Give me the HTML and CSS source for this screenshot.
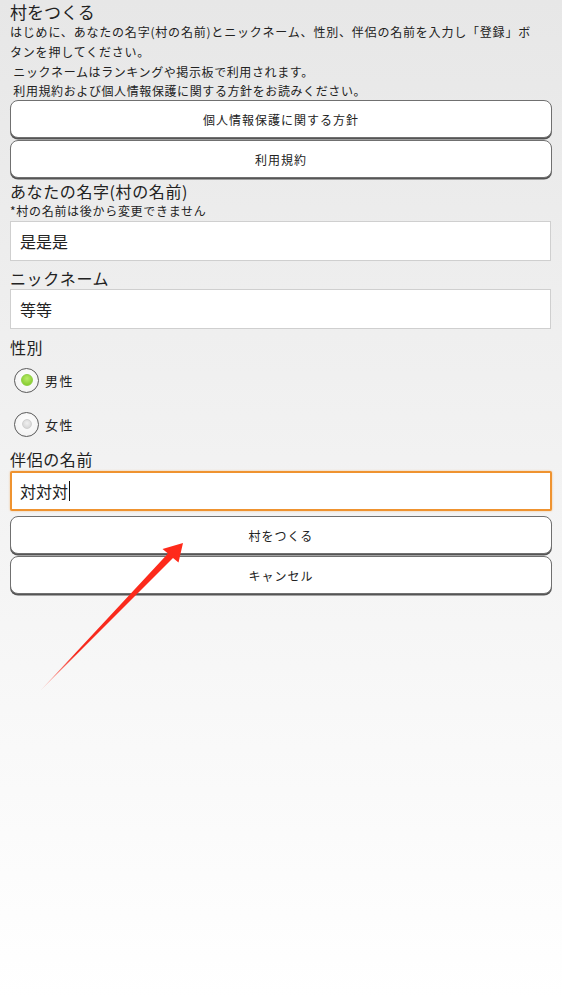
FILE: index.html
```html
<!DOCTYPE html>
<html lang="ja">
<head>
<meta charset="utf-8">
<title>村をつくる</title>
<link rel="stylesheet" href="styles.css">
</head>
<body>
<div class="page">
  <h1 class="title">村をつくる</h1>
  <p class="desc">はじめに、あなたの名字(村の名前)とニックネーム、性別、伴侶の名前を入力し「登録」ボタンを押してください。</p>
  <p class="desc desc-sub">&nbsp;ニックネームはランキングや掲示板で利用されます。<br>&nbsp;利用規約および個人情報保護に関する方針をお読みください。</p>
  <div class="btn">個人情報保護に関する方針</div>
  <div class="btn">利用規約</div>

  <div class="label first">あなたの名字(村の名前)</div>
  <div class="note">*村の名前は後から変更できません</div>
  <div class="field">是是是</div>

  <div class="label">ニックネーム</div>
  <div class="field">等等</div>

  <div class="label sex">性別</div>
  <div class="radio-row"><span class="radio on"></span><span class="radio-text">男性</span></div>
  <div class="radio-row"><span class="radio"></span><span class="radio-text">女性</span></div>

  <div class="label partner">伴侶の名前</div>
  <div class="field focus">対対対<span class="caret"></span></div>

  <div class="btn submit">村をつくる</div>
  <div class="btn">キャンセル</div>
</div>
<svg class="arrow" width="562" height="999" viewBox="0 0 562 999">
  <defs>
    <linearGradient id="ag" x1="40" y1="691" x2="183" y2="543" gradientUnits="userSpaceOnUse">
      <stop offset="0" stop-color="#ff3a2a" stop-opacity="0.25"/>
      <stop offset="0.25" stop-color="#f62a1e"/>
      <stop offset="1" stop-color="#ff2a1a"/>
    </linearGradient>
  </defs>
  <polygon points="40,691 168,553.5 162.5,549 183,543 178.5,562.5 173,558" fill="url(#ag)"/>
</svg>
</body>
</html>
```

FILE: styles.css
```css
html, body {
  margin: 0;
  padding: 0;
}
body {
  min-height: 999px;
  background: linear-gradient(#e7e7e7 0%, #f3f3f3 50%, #ffffff 100%);
  font-family: "Noto Sans CJK JP", "Noto Sans", sans-serif;
  color: #222;
  position: relative;
}
.page {
  padding: 0 10px;
  display: flex;
  flex-direction: column;
}
.title {
  margin: 0;
  padding-top: 1px;
  font-size: 17px;
  font-weight: normal;
  line-height: 21px;
}
.desc {
  margin: 0;
  font-size: 12px;
  letter-spacing: 0.8px;
  line-height: 20px;
  max-width: 530px;
}
.desc-sub {
  line-height: 19px;
  letter-spacing: 0.6px;
  max-width: none;
}
.btn {
  height: 36px;
  border: 1.5px solid #707070;
  border-radius: 8px;
  background: #fff;
  box-shadow: 0 1.5px 0 #555;
  display: flex;
  align-items: center;
  justify-content: center;
  font-size: 12px;
  letter-spacing: 1px;
  margin-bottom: 2px;
}
.btn.submit {
  margin-top: 5px;
}
.label {
  font-size: 16px;
  letter-spacing: 0.6px;
  line-height: 22px;
  margin-top: 6px;
}
.label.first {
  margin-top: 0;
}
.label.sex {
  margin-top: 7px;
}
.label.partner {
  margin-top: 2px;
  margin-bottom: 1px;
}
.note {
  font-size: 12px;
  letter-spacing: 0.7px;
  line-height: 18px;
  margin-bottom: 1px;
}
.field {
  height: 38px;
  border: 1px solid #cfcfcf;
  background: #fff;
  box-sizing: content-box;
  padding-left: 9px;
  display: flex;
  align-items: center;
  font-size: 16px;
  margin-right: 1px;
}
.field.focus {
  height: 36px;
  border: 2px solid #ef9330;
  border-radius: 2px;
  padding-left: 8px;
  box-shadow: 0 0 2px rgba(239, 147, 48, 0.6);
  margin-right: 0;
}
.caret {
  display: inline-block;
  width: 1px;
  height: 20px;
  background: #111;
  margin-left: 1px;
}
.radio-row {
  height: 44px;
  display: flex;
  align-items: center;
  padding-left: 4px;
}
.radio {
  width: 23px;
  height: 23px;
  border: 1.5px solid #5a5a5a;
  border-radius: 50%;
  background: radial-gradient(circle at 50% 40%, #ffffff 0%, #f4f4f4 70%, #e6e6e6 100%);
  display: flex;
  align-items: center;
  justify-content: center;
  margin-right: 6px;
}
.radio::after {
  content: "";
  width: 8px;
  height: 8px;
  border-radius: 50%;
  background: radial-gradient(circle at 50% 40%, #f0f0f0, #cfcfcf);
  border: 1px solid #d0d0d0;
}
.radio.on::after {
  width: 10px;
  height: 10px;
  background: radial-gradient(circle at 50% 35%, #b8ec6a, #7cc521);
  border: 1px solid #8fcf45;
}
.radio-text {
  font-size: 13px;
  letter-spacing: 1.5px;
}
.arrow {
  position: absolute;
  left: 0;
  top: 0;
  pointer-events: none;
}
```
